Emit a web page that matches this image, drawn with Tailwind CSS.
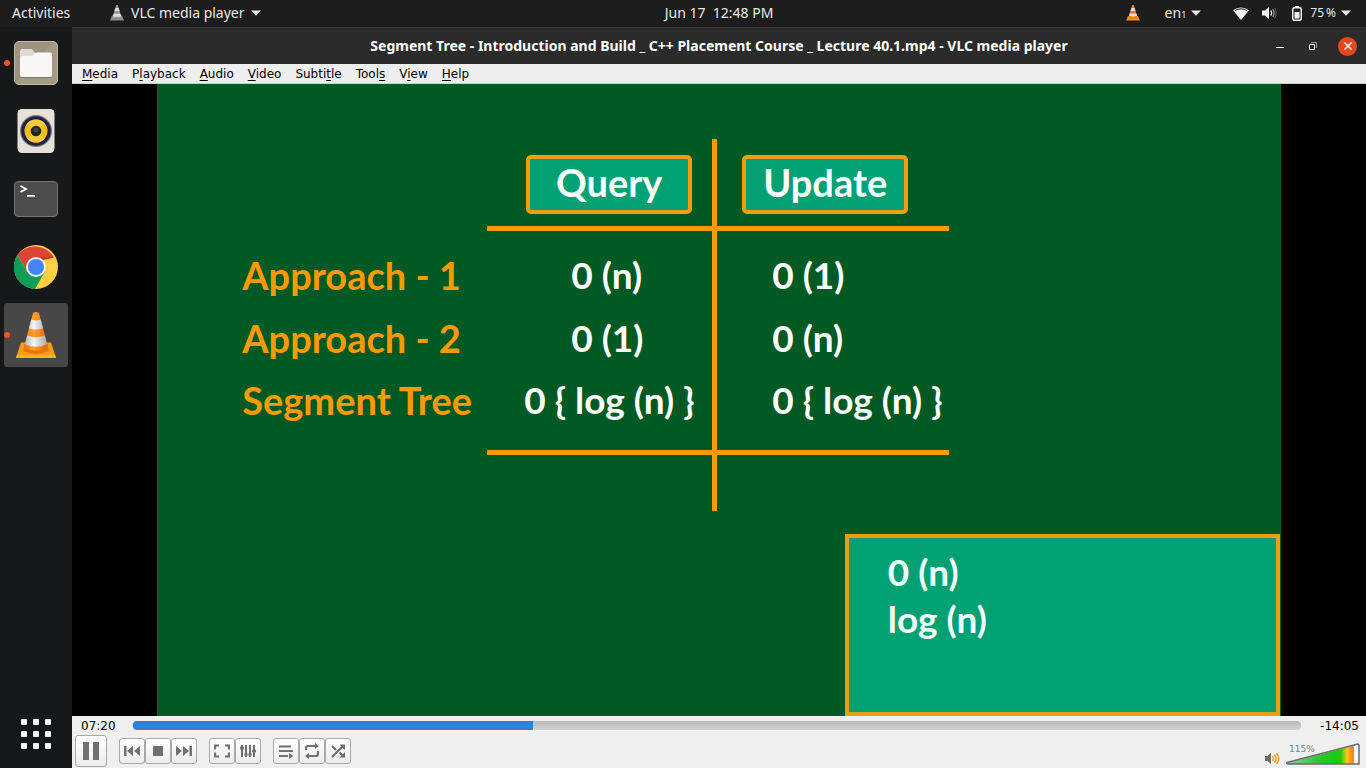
<!DOCTYPE html>
<html lang="en">
<head>
<meta charset="utf-8">
<title>VLC media player</title>
<script src="https://cdn.jsdelivr.net/npm/@tailwindcss/browser@4"></script>
</head>
<body class="h-screen flex flex-col overflow-hidden bg-black font-['Noto_Sans',sans-serif] text-sm">

<svg class="absolute size-0" aria-hidden="true">
  <defs>
    <linearGradient id="cone-orange" x1="0" x2="1"><stop offset="0" stop-color="#f57900"/><stop offset=".4" stop-color="#ffa02c"/><stop offset="1" stop-color="#e06400"/></linearGradient>
    <linearGradient id="cone-white" x1="0" x2="1"><stop offset="0" stop-color="#b4b4b4"/><stop offset=".4" stop-color="#f4f4f4"/><stop offset="1" stop-color="#a8a8a8"/></linearGradient>
    <symbol id="caret" viewBox="0 0 10 6"><path d="M0 .5h10L5 5.8z" fill="currentColor"/></symbol>
  </defs>
</svg>

<!-- Desktop top bar -->
<header class="h-[27px] shrink-0 pb-px grid grid-cols-[72px_1fr_auto_1fr] items-center bg-[#1d1d1d] text-[#e8e8e8] whitespace-nowrap">
  <button class="pl-3 text-left">Activities</button>
  <button class="pl-[37px] flex items-center">
    <svg class="w-4 h-4 mr-[6px]" viewBox="0 0 16 16"><path d="M3 10.500h10l2 5H1z" fill="#8c8c8c"/><path d="M7.200 0h1.600l3.700 12.500q-4.500 1.500-9 0z" fill="#999"/><path d="M6.300 3h3.400l.9 3H5.400zM4.600 8.700h6.800l.8 2.500q-4.200 1.200-8.400 0z" fill="#dedede"/></svg>
    VLC media player
    <svg class="w-[10px] h-[6px] ml-[6px]"><use href="#caret"/></svg>
  </button>
  <time class="whitespace-pre">Jun 17  12:48 PM</time>
  <div class="flex items-center justify-end pr-[15px]">
    <button class="mr-[25px]" aria-label="VLC"><svg class="w-[14px] h-[16px]" viewBox="0 0 14 16"><path d="M2 11h10l2 4.500H0z" fill="#f58a0c"/><path d="M6.200 0h1.600l3.700 12.500q-4.500 1.500-9 0z" fill="#ef7c10"/><path d="M5.400 3h3.200l.9 3h-5zM3.600 8.500h6.800l.7 2.300q-4.100 1.200-8.200 0z" fill="#dedede"/></svg></button>
    <button class="flex items-center mr-8">en<span class="text-[9px] mt-[5px]">1</span><svg class="w-[10px] h-[6px] ml-[5px]"><use href="#caret"/></svg></button>
    <button class="flex items-center" aria-label="System menu">
      <svg class="w-4 h-[13px] mr-[13px]" viewBox="0 0 16 13"><path d="M0 3.200Q8-2.200 16 3.200L8 13z" fill="#f2f2f2"/><path d="M1.600 4Q8-.4 14.400 4" fill="none" stroke="#1d1d1d" stroke-width="1"/></svg>
      <svg class="w-[15px] h-[14px] mr-[15px]" viewBox="0 0 15 14" fill="none"><path d="M0 4.500h3L7 1v12L3 9.500H0z" fill="#f2f2f2"/><path d="M8.800 4.500q1.600 2.500 0 5" stroke="#eee" stroke-width="1.400"/><path d="M10.800 3q2.600 4 0 8" stroke="#999" stroke-width="1.200"/><path d="M12.600 1.800q3.200 5.200 0 10.400" stroke="#666"/></svg>
      <svg class="w-[10px] h-[15px] mr-2" viewBox="0 0 10 15"><path d="M3 0h4v2H3z" fill="#f2f2f2"/><rect x=".75" y="1.750" width="8.500" height="12.500" rx="1.500" fill="none" stroke="#f2f2f2" stroke-width="1.500"/><path d="M2.500 6h5v6.500h-5z" fill="#f2f2f2"/></svg>
      <span class="text-xs">75&#8201;%</span>
      <svg class="w-[10px] h-[6px] ml-[5px]"><use href="#caret"/></svg>
    </button>
  </div>
</header>

<div class="flex flex-1 min-h-0">
  <!-- Application dock -->
  <nav class="w-[72px] shrink-0 flex flex-col items-center gap-1 pt-1 pb-[19px] bg-[#17181a]">
    <button class="relative size-16 flex items-center justify-center" aria-label="Files">
      <span class="absolute left-0 size-[6px] rounded-full bg-[#e95420]"></span>
      <svg class="size-11" viewBox="0 0 44 44"><rect x=".5" y=".5" width="43" height="43" rx="4.500" fill="#a39b86" stroke="#c1baa8"/><path d="M1 43V5Q1 1 5 1h34z" fill="#968e7a" opacity=".5"/><path d="M6 10q0-2 2-2h10l3 4v6H6z" fill="#dedacf"/><path d="M6 17q0-2 2-2h9q2 0 3-2 1-1.500 3-1.500h13q2 0 2 2V34q0 2-2 2H8q-2 0-2-2z" fill="#f8f7f5"/><path d="M7 36.500h30" stroke="#7f7969"/></svg>
    </button>
    <button class="size-16 flex items-center justify-center" aria-label="Rhythmbox">
      <svg class="size-11" viewBox="0 0 44 44"><rect x="3.500" y="0" width="37" height="44" rx="4.500" fill="#e5e1d8"/><circle cx="22" cy="22" r="16" fill="#777782"/><circle cx="22" cy="22" r="14.800" fill="#20213a"/><circle cx="22" cy="22" r="11.500" fill="#f0be1c"/><path d="M22 22 13 14.500a11.500 11.500 0 0 1 18 0zM22 22l9 7.500a11.500 11.500 0 0 1-18 0z" fill="#f7d24a" opacity=".6"/><circle cx="22" cy="22" r="5.300" fill="#242424"/><circle cx="22" cy="21" r="2.500" fill="#444"/></svg>
    </button>
    <button class="size-16 flex items-center justify-center" aria-label="Terminal">
      <svg class="w-11 h-9" viewBox="0 0 44 36"><rect x=".5" y=".5" width="43" height="35" rx="3.500" fill="#4d4d4d" stroke="#747474"/><path d="M6.500 5l5.500 3-5.500 3M13 14.800h8" fill="none" stroke="#fff" stroke-width="1.800"/></svg>
    </button>
    <button class="size-16 flex items-center justify-center" aria-label="Google Chrome">
      <svg class="size-11" viewBox="0 0 44 44"><circle cx="22" cy="22" r="22" fill="#ffce44"/><path d="M22 12h17.600A22 22 0 0 0 3.500 10L13.300 27z" fill="#db4437"/><path d="M3.500 10A22 22 0 0 0 21 44l9.700-17L22 32l-8.700-5z" fill="#0f9d58"/><path d="M22 12h17.600l-.4.700L25 16z" fill="#c23b30"/><circle cx="22" cy="22" r="10" fill="#f1f1f1"/><circle cx="22" cy="22" r="8" fill="#4285f4"/></svg>
    </button>
    <button class="relative size-16 flex items-center justify-center rounded-[3px] bg-[#474747]" aria-label="VLC media player">
      <span class="absolute left-0 size-[6px] rounded-full bg-[#e95420]"></span>
      <svg class="w-10 h-[46px]" viewBox="0 0 40 46"><path d="M5 30.500h30l5 15H0z" fill="#ff9e12"/><path d="M1 43h38l1 3H0z" fill="#ffb21c"/><path d="M9 30h22l2 9q-13 6-26 0z" fill="#e87508"/><path d="M17 1q3-2 6 0l9 34q-12 7-24 0z" fill="url(#cone-orange)"/><path d="M15.300 7.500q4.700 2 9.400 0l2.300 8.800q-7 2.500-14 0zM11.200 23.500q8.800 3.500 17.600 0l2.200 8.700q-11 5-22 0z" fill="url(#cone-white)"/></svg>
    </button>
    <button class="mt-auto grid grid-cols-3 gap-[6px]" aria-label="Show Applications">
      <span class="size-[6px] rounded-[1px] bg-[#f2f2f2]"></span><span class="size-[6px] rounded-[1px] bg-[#f2f2f2]"></span><span class="size-[6px] rounded-[1px] bg-[#f2f2f2]"></span>
      <span class="size-[6px] rounded-[1px] bg-[#f2f2f2]"></span><span class="size-[6px] rounded-[1px] bg-[#f2f2f2]"></span><span class="size-[6px] rounded-[1px] bg-[#f2f2f2]"></span>
      <span class="size-[6px] rounded-[1px] bg-[#f2f2f2]"></span><span class="size-[6px] rounded-[1px] bg-[#f2f2f2]"></span><span class="size-[6px] rounded-[1px] bg-[#f2f2f2]"></span>
    </button>
  </nav>

  <!-- Player window -->
  <main class="flex-1 min-w-0 flex flex-col">
    <div class="h-[37px] shrink-0 grid grid-cols-[1fr_auto_1fr] items-center bg-[#2b2b2b] border-t border-[#3a3a3a] text-white">
      <h1 class="col-start-2 font-bold whitespace-nowrap">Segment Tree - Introduction and Build _ C++ Placement Course _ Lecture 40.1.mp4 - VLC media player</h1>
      <div class="flex items-center justify-end pr-[9px]">
        <button class="mr-[25px]" aria-label="Minimize"><svg class="w-2 h-2" viewBox="0 0 8 8"><path d="M0 5h8v1H0z" fill="#fff"/></svg></button>
        <button class="mr-[21px]" aria-label="Restore"><svg class="w-2 h-2" viewBox="0 0 8 8" fill="none"><path d="M.5 2.500h5v5h-5z" stroke="#fff"/><path d="M2 .5h5.500V6" stroke="#999"/></svg></button>
        <button class="size-[19px] rounded-full bg-[#e2491b] flex items-center justify-center" aria-label="Close"><svg class="size-2" viewBox="0 0 8 8"><path d="M.5.5l7 7m0-7l-7 7" stroke="#fff" stroke-width="1.500"/></svg></button>
      </div>
    </div>

    <div class="h-5 shrink-0 flex items-center gap-[14px] px-[10px] bg-[#eee] border-b border-[#ccc] text-black text-xs font-['DejaVu_Sans',sans-serif]">
      <button><u class="underline-offset-2">M</u>edia</button>
      <button>P<u class="underline-offset-2">l</u>ayback</button>
      <button><u class="underline-offset-2">A</u>udio</button>
      <button><u class="underline-offset-2">V</u>ideo</button>
      <button>Subti<u class="underline-offset-2">t</u>le</button>
      <button>Tool<u class="underline-offset-2">s</u></button>
      <button>V<u class="underline-offset-2">i</u>ew</button>
      <button><u class="underline-offset-2">H</u>elp</button>
    </div>

    <!-- Video frame -->
    <div class="flex-1 min-h-0 flex justify-center bg-black">
      <section class="h-full aspect-video flex flex-col bg-[#015a24] font-['Lato',sans-serif] font-bold text-[37px]/[44px] text-white whitespace-nowrap">
        <table class="self-start mt-[55px] ml-[85px] table-fixed w-[707px] border-separate border-spacing-0 text-left">
          <colgroup><col class="w-[245px]"><col class="w-[230px]"><col class="w-[232px]"></colgroup>
          <thead class="text-[38px]">
            <tr>
              <td class="p-0"></td>
              <th class="p-0 pt-4 pb-3 pl-[39px] border-b-[5px] border-r-[5px] border-[#ff9900]"><div class="w-[166px] h-[59px] flex items-center justify-center rounded-[5px] border-4 border-[#f79c0c] bg-[#02a173] pb-[6px]">Query</div></th>
              <th class="p-0 pt-4 pb-3 pl-[25px] border-b-[5px] border-[#ff9900]"><div class="w-[166px] h-[59px] flex items-center justify-center rounded-[5px] border-4 border-[#f79c0c] bg-[#02a173] pb-[6px]">Update</div></th>
            </tr>
          </thead>
          <tbody class="align-top">
            <tr>
              <th class="p-0 pt-[22px] pb-[9px] text-[38px] text-[#ff9900]">Approach - 1</th>
              <td class="p-0 pt-[22px] pb-[9px] pl-[84px] border-r-[5px] border-[#ff9900]">0 (n)</td>
              <td class="p-0 pt-[22px] pb-[9px] pl-[55px]">0 (1)</td>
            </tr>
            <tr>
              <th class="p-0 pt-[10px] pb-[9px] text-[38px] text-[#ff9900]">Approach - 2</th>
              <td class="p-0 pt-[10px] pb-[9px] pl-[84px] border-r-[5px] border-[#ff9900]">0 (1)</td>
              <td class="p-0 pt-[10px] pb-[9px] pl-[55px]">0 (n)</td>
            </tr>
            <tr>
              <th class="align-top p-0 pt-[9px] pb-7 text-[38px] text-[#ff9900]">Segment Tree</th>
              <td class="p-0 pt-[9px] pb-7 pl-[37px] border-r-[5px] border-b-[5px] border-[#ff9900]">0 { log (n) }</td>
              <td class="p-0 pt-[9px] pb-7 pl-[55px] border-b-[5px] border-[#ff9900]">0 { log (n) }</td>
            </tr>
            <tr>
              <td class="p-0 h-14"></td>
              <td class="p-0 border-r-[5px] border-[#ff9900]"></td>
              <td class="p-0"></td>
            </tr>
          </tbody>
        </table>
        <div class="mt-auto ml-auto mr-px w-[435px] h-[182px] pt-[10px] pl-[39px] border-4 border-[#f09c12] bg-[#02a173] leading-[47px] text-[#f0fff8]">
          <p>0 (n)</p>
          <p>log (n)</p>
        </div>
      </section>
    </div>

    <!-- Playback controls -->
    <footer class="h-[52px] shrink-0 flex flex-col bg-[#efefef] text-black text-xs font-['DejaVu_Sans',sans-serif]">
      <div class="h-[19px] flex items-center pl-[9px] pr-[7px]">
        <span>07:20</span>
        <input type="range" min="0" max="1285" value="440" aria-label="Position" class="appearance-none flex-1 min-w-0 h-[9px] ml-[17px] mr-[19px] rounded-[4px] [&::-webkit-slider-thumb]:appearance-none [&::-webkit-slider-thumb]:w-0" style="background:linear-gradient(#2980d6,#3584d2) 0 0/34.25% 100% no-repeat,linear-gradient(#b8b8b8,#d0d0d0)">
        <span>-14:05</span>
      </div>
      <div class="flex-1 flex items-center pb-px pl-[3px] pr-[6px] gap-3 text-[#707070]">
        <button class="size-8 flex items-center justify-center rounded-[3px] border border-[#a8a8a8] bg-linear-to-b from-white to-[#ececec]" aria-label="Pause"><svg class="size-[18px]" viewBox="0 0 18 18" fill="currentColor"><path d="M1 0h6v18H1zM11 0h6v18h-6z"/></svg></button>
        <div class="flex">
          <button class="size-[26px] flex items-center justify-center rounded-[3px] border border-[#a8a8a8] bg-linear-to-b from-white to-[#ececec]" aria-label="Previous"><svg class="size-4" viewBox="0 0 16 16" fill="currentColor"><path d="M0 3h2.500v10H0zM9 3v10L3 8zM16 3v10l-6-5z"/></svg></button>
          <button class="size-[26px] flex items-center justify-center rounded-[3px] border border-[#a8a8a8] bg-linear-to-b from-white to-[#ececec]" aria-label="Stop"><svg class="size-4" viewBox="0 0 16 16" fill="currentColor"><path d="M3 3h10v10H3z"/></svg></button>
          <button class="size-[26px] flex items-center justify-center rounded-[3px] border border-[#a8a8a8] bg-linear-to-b from-white to-[#ececec]" aria-label="Next"><svg class="size-4" viewBox="0 0 16 16" fill="currentColor"><path d="M13.500 3H16v10h-2.500zM7 3v10l6-5zM0 3v10l6-5z"/></svg></button>
        </div>
        <div class="flex">
          <button class="size-[26px] flex items-center justify-center rounded-[3px] border border-[#a8a8a8] bg-linear-to-b from-white to-[#ececec]" aria-label="Fullscreen"><svg class="size-4" viewBox="0 0 16 16" fill="none" stroke="currentColor" stroke-width="2.200"><path d="M5 2.500H1v4M11 2.500h4v4M15 9.500v4h-4M5 13.500H1v-4"/></svg></button>
          <button class="size-[26px] flex items-center justify-center rounded-[3px] border border-[#a8a8a8] bg-linear-to-b from-white to-[#ececec]" aria-label="Extended settings"><svg class="size-4" viewBox="0 0 16 16" fill="none" stroke="currentColor" stroke-width="2"><path d="M2 2v12M6 2v12M10 2v12M14 2v12"/><path d="M0 5h4M4.500 11.500h3M8.500 11.500h3M12 8h4" stroke-width="2.400"/></svg></button>
        </div>
        <div class="flex">
          <button class="size-[26px] flex items-center justify-center rounded-[3px] border border-[#a8a8a8] bg-linear-to-b from-white to-[#ececec]" aria-label="Playlist"><svg class="size-4" viewBox="0 0 16 16"><path d="M1 3.500h12M1 8h14M1 13h9" stroke="currentColor" stroke-width="2.200"/><path d="M11 10v6l4.500-3z" fill="currentColor"/></svg></button>
          <button class="size-[26px] flex items-center justify-center rounded-[3px] border border-[#a8a8a8] bg-linear-to-b from-white to-[#ececec]" aria-label="Loop"><svg class="size-4" viewBox="0 0 16 16"><path d="M2 7V5q0-2 2-2h8M14 8v3q0 2-2 2H4" fill="none" stroke="currentColor" stroke-width="2.200"/><path d="M11 0l4 3-4 3zM5 10v6l-4-3z" fill="currentColor"/></svg></button>
          <button class="size-[26px] flex items-center justify-center rounded-[3px] border border-[#a8a8a8] bg-linear-to-b from-white to-[#ececec]" aria-label="Random"><svg class="size-4" viewBox="0 0 16 16"><path d="M2 14L13 3M2 3l4 4M9.500 9.500L13 13" fill="none" stroke="currentColor" stroke-width="2.200"/><path d="M9.500 1.500H15V7zM9.500 14.500H15V9z" fill="currentColor"/></svg></button>
        </div>
        <div class="ml-auto mt-[5px] flex items-end gap-[6px]">
          <button aria-label="Mute"><svg class="w-[15px] h-[13px]" viewBox="0 0 15 13" fill="none"><path d="M0 4h2.500L6 .8v11.400L2.500 9H0z" fill="#6c6c6c"/><path d="M7.500 4q2 2.500 0 5M9.500 2.500q3.300 4 0 8M11.500 1q4.700 5.500 0 11" stroke="#f19a2e" stroke-width="1.400"/></svg></button>
          <label class="relative block w-[74px] h-[22px]">
            <svg class="size-full" viewBox="0 0 74 22"><defs><linearGradient id="vol" x1="0" x2="1"><stop offset="0" stop-color="#8ecf8e"/><stop offset=".5" stop-color="#2cc52c"/><stop offset=".8" stop-color="#1bcb0f"/><stop offset=".9" stop-color="#ffc420"/><stop offset=".97" stop-color="#ff8614"/></linearGradient></defs><path d="M1 20 68 2.700V21H1z" fill="url(#vol)"/><path d="M68 2.700l5-1.500V21h-5z" fill="#f7f7f7"/><path d="M1 19.500 71 1.200q2-.5 2 1.300V21H2q-2-.7-1-1.500z" fill="none" stroke="#6b6b6b" stroke-width="1.500"/></svg>
            <span class="absolute left-[3px] top-0 text-[9px] leading-3 text-[#808080]">115%</span>
            <input type="range" min="0" max="125" value="115" aria-label="Volume" class="absolute inset-0 w-full h-full opacity-0">
          </label>
        </div>
      </div>
    </footer>
  </main>
</div>
</body>
</html>
